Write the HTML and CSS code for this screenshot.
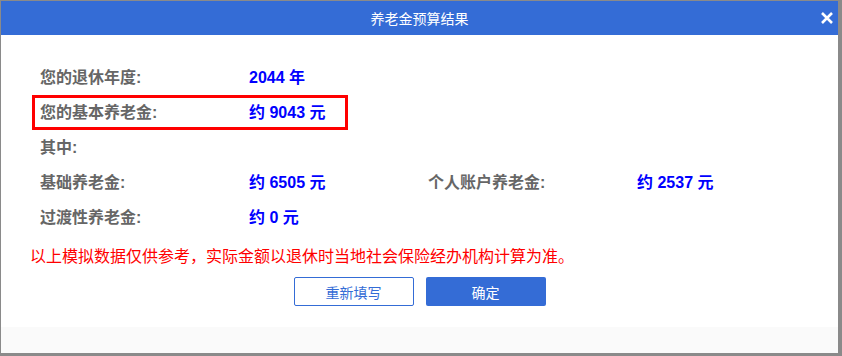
FILE: index.html
```html
<!DOCTYPE html>
<html lang="zh-CN">
  <head>
    <meta charset="UTF-8" />
    <meta name="viewport" content="width=device-width, initial-scale=1.0" />
    <title>养老金预算结果</title>
    <link rel="stylesheet" href="styles.css">
  </head>
  <body>
    <div class="dialog">
      <div class="dialog-header">
        <span class="dialog-title">养老金预算结果</span>
        <span class="dialog-close">
          <svg width="12" height="12" viewBox="0 0 12 12">
            <path d="M1 1 L11 11 M11 1 L1 11" stroke="#ffffff" stroke-width="2.6" />
          </svg>
        </span>
      </div>

      <div class="dialog-body">
        <div class="result-row">
          <span class="label">您的退休年度:</span>
          <span class="value">2044 年</span>
        </div>
        <div class="result-row highlight">
          <span class="label">您的基本养老金:</span>
          <span class="value">约 9043 元</span>
        </div>
        <div class="result-row">
          <span class="label">其中:</span>
        </div>
        <div class="result-row">
          <span class="label">基础养老金:</span>
          <span class="value short">约 6505 元</span>
          <span class="label">个人账户养老金:</span>
          <span class="value">约 2537 元</span>
        </div>
        <div class="result-row">
          <span class="label">过渡性养老金:</span>
          <span class="value">约 0 元</span>
        </div>

        <p class="notice">以上模拟数据仅供参考，实际金额以退休时当地社会保险经办机构计算为准。</p>

        <div class="actions">
          <button type="button" class="btn btn-outline">重新填写</button>
          <button type="button" class="btn btn-primary">确定</button>
        </div>
      </div>

      <div class="dialog-footer"></div>
    </div>
  </body>
</html>
```

FILE: styles.css
```css
body {
  font-family: "Liberation Sans", "Noto Sans CJK SC", sans-serif;
  background-color: #8a8a8a;
  margin: 0;
  padding: 1px 4px 3px 1px;
}

.dialog {
  background-color: #ffffff;
  height: 352px;
  display: flex;
  flex-direction: column;
}

.dialog-header {
  background-color: #346cd6;
  height: 34px;
  display: flex;
  align-items: center;
  justify-content: center;
  position: relative;
}

.dialog-title {
  color: #ffffff;
  font-size: 14px;
}

.dialog-close {
  position: absolute;
  right: 5px;
  top: 11px;
  width: 12px;
  height: 12px;
  display: flex;
}

.dialog-body {
  flex: 1;
  padding: 25px 0 0 39px;
}

.result-row {
  display: flex;
  height: 35px;
  line-height: 35px;
  font-size: 16px;
  font-weight: bold;
  white-space: nowrap;
}

.result-row.highlight {
  width: 316px;
  margin-left: -8px;
  padding-left: 5px;
  border: 3px solid #ff0000;
  box-sizing: border-box;
  line-height: 29px;
}

.label {
  color: #666666;
  width: 209px;
}

.value {
  color: #0000ff;
}

.value.short {
  width: 179px;
}

.notice {
  color: #ff0000;
  font-size: 16px;
  line-height: 24px;
  margin: 10px 0 0 -10px;
}

.actions {
  display: flex;
  justify-content: center;
  gap: 12px;
  margin: 8px 0 0 -39px;
}

.btn {
  width: 120px;
  height: 29px;
  font-family: inherit;
  font-size: 14px;
  border-radius: 2px;
  cursor: pointer;
}

.btn-outline {
  background-color: #ffffff;
  color: #346cd6;
  border: 1px solid #346cd6;
}

.btn-primary {
  background-color: #346cd6;
  color: #ffffff;
  border: none;
}

.dialog-footer {
  height: 26px;
  background-color: #fafafa;
}
```
